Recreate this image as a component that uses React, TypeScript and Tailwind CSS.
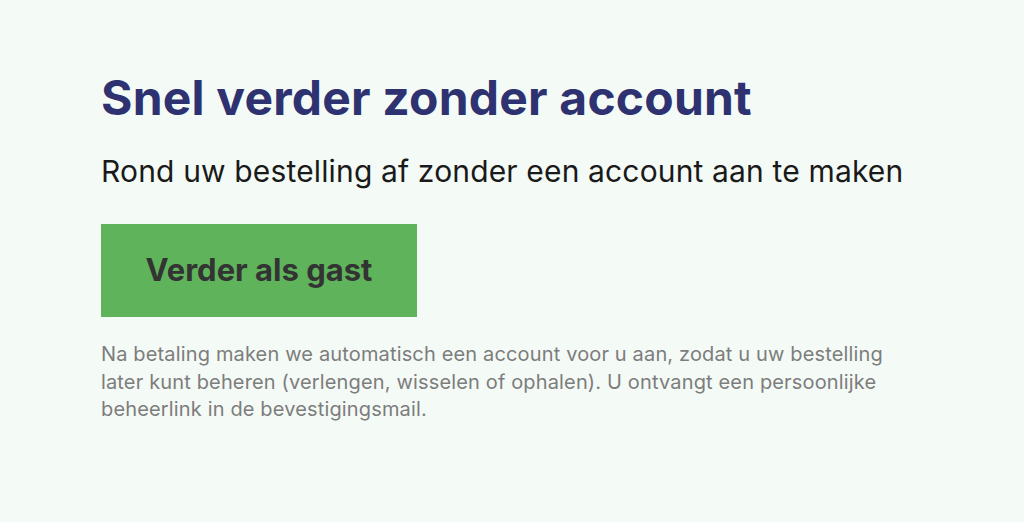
import React from 'react';

export default function App() {
  return (
    <div className="min-h-[522px] w-full bg-[#f4faf6] font-['Inter',sans-serif]">
      <div className="px-[101px] pt-[70px]">
        <h1 className="text-[48px] leading-[56px] font-bold tracking-[0.2px] text-[#2e3270]">
          Snel verder zonder account
        </h1>
        <p className="mt-[26px] text-[30px] leading-[38px] tracking-[0.15px] text-[#1a1a1a]">
          Rond uw bestelling af zonder een account aan te maken
        </p>
        <button className="mt-[34px] flex h-[93px] w-[316px] items-center justify-center bg-[#5fb35a] text-[31px] font-bold text-[#333333]">
          Verder als gast
        </button>
        <p className="mt-[24px] max-w-[785px] text-[20px] leading-[27.5px] text-[#7d7d7d] tracking-[0.15px]">
          Na betaling maken we automatisch een account voor u aan, zodat u uw bestelling later kunt beheren
          (verlengen, wisselen of ophalen). U ontvangt een persoonlijke beheerlink in de bevestigingsmail.
        </p>
      </div>
    </div>
  );
}
